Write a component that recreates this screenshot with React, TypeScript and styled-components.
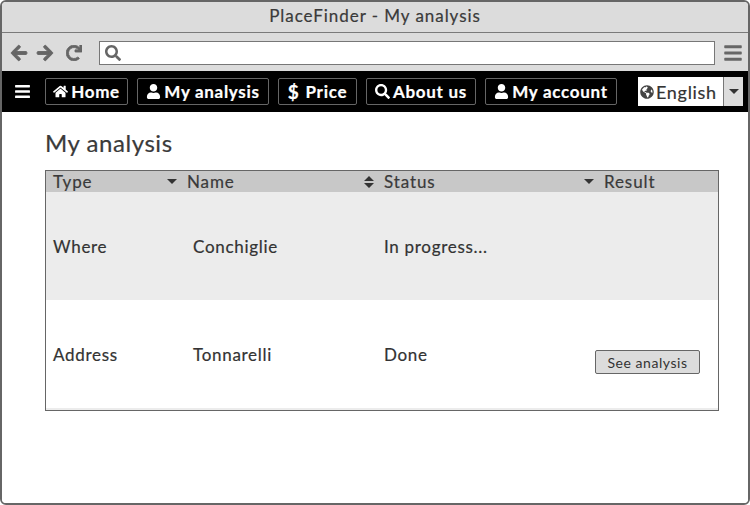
import React from 'react';
import styled, { createGlobalStyle } from 'styled-components';
import { FaArrowLeft, FaArrowRight, FaBars, FaGlobeAmericas, FaHome, FaRedo, FaSearch, FaUser } from 'react-icons/fa';

const GlobalStyle = createGlobalStyle`
    html, body { margin: 0; padding: 0; background: #fff; }
    body { font-family: "Lato", "Liberation Sans", sans-serif; color: #333; -webkit-text-stroke: 0.2px; }
`;

const Window = styled.div`
    box-sizing: border-box;
    width: 750px;
    height: 505px;
    border: 2px solid #666;
    border-radius: 6px;
    overflow: hidden;
    display: flex;
    flex-direction: column;
`;

const TitleBar = styled.div`
    box-sizing: border-box;
    height: 31px;
    padding-bottom: 3px;
    background: #dcdcdc;
    border-bottom: 1px solid #7a7a7a;
    display: flex;
    align-items: center;
    justify-content: center;
    font-size: 17px;
    letter-spacing: 0.95px;
    color: #3a3a3a;
`;

const AddressRow = styled.div`
    box-sizing: border-box;
    height: 38px;
    padding: 2px 0 0 8px;
    background: #dcdcdc;
    display: flex;
    align-items: center;
    color: #666;
`;

const NavIcons = styled.div`
    width: 89px;
    display: flex;
    align-items: center;
    gap: 8px;
    font-size: 18px;
    svg { stroke: currentColor; stroke-width: 28px; }
    svg:last-child { margin-left: 4px; font-size: 16px; }
`;

const AddressInput = styled.div`
    box-sizing: border-box;
    width: 616px;
    height: 24px;
    background: #fff;
    border: 1px solid #777;
    display: flex;
    align-items: center;
    padding-left: 5px;
    font-size: 16px;
`;

const MenuIcon = styled.div`
    margin-left: 8px;
    font-size: 20px;
    display: flex;
`;

const NavBar = styled.nav`
    height: 41px;
    background: #000;
    display: flex;
    align-items: center;
    padding-left: 12px;
`;

const Burger = styled.div`
    color: #fff;
    width: 31px;
    font-size: 17px;
    display: flex;
`;

const NavItems = styled.div`
    display: flex;
    gap: 9px;
`;

const NavButton = styled.div<{ $w: number }>`
    box-sizing: border-box;
    width: ${p => p.$w}px;
    height: 27px;
    border: 1px solid #666;
    border-radius: 2px;
    color: #fff;
    font-weight: 700;
    font-size: 17px;
    letter-spacing: 0.7px;
    display: flex;
    align-items: center;
    justify-content: center;
    gap: 3px;
    svg { font-size: 15px; flex: none; }
`;

const Dollar = styled.span`
    font-size: 19px;
    margin-right: 3px;
`;

const LangSelect = styled.div`
    margin-left: 21px;
    width: 105px;
    height: 29px;
    display: flex;
`;

const LangValue = styled.div`
    width: 85px;
    background: #fff;
    color: #333;
    font-size: 18px;
    letter-spacing: 0.7px;
    display: flex;
    align-items: center;
    padding-left: 2px;
    box-sizing: border-box;
    gap: 2px;
    svg { font-size: 14px; flex: none; color: #444; }
`;

const LangArrow = styled.div`
    width: 20px;
    background: #dcdcdc;
    border-left: 1px solid #777;
    box-sizing: border-box;
    display: flex;
    align-items: center;
    justify-content: center;
    color: #333;
`;

const Content = styled.main`
    flex: 1;
    background: #fff;
    padding: 16px 29px 0 43px;
`;

const Heading = styled.h1`
    margin: 0 0 12px;
    font-size: 24px;
    line-height: 30px;
    font-weight: 400;
    letter-spacing: 0.55px;
    color: #3a3a3a;
`;

const Table = styled.div`
    box-sizing: border-box;
    width: 674px;
    height: 241px;
    border: 1px solid #666;
    background: #ececec;
`;

const HeaderRow = styled.div`
    height: 21px;
    background: #c8c8c8;
    display: grid;
    grid-template-columns: 134px 197px 220px 1fr;
    font-size: 17px;
    letter-spacing: 0.9px;
    color: #3a3a3a;
`;

const HeaderCell = styled.div`
    padding-left: 7px;
    display: flex;
    align-items: center;
    justify-content: space-between;
    svg { margin-right: 3px; color: #333; }
`;

const Row = styled.div<{ $alt?: boolean }>`
    height: 108px;
    background: ${p => (p.$alt ? '#ececec' : '#fff')};
    display: grid;
    grid-template-columns: 140px 191px 211px 1fr;
    align-items: center;
    font-size: 17px;
    letter-spacing: 0.7px;
    color: #333;
`;

const Cell = styled.div`
    padding-left: 7px;
`;

const ActionCell = styled.div`
    padding: 16px 0 0 7px;
`;

const SeeButton = styled.button`
    box-sizing: border-box;
    width: 105px;
    height: 24px;
    padding: 0;
    background: #dcdcdc;
    border: 1px solid #666;
    border-radius: 2px;
    font-family: inherit;
    font-size: 14px;
    letter-spacing: 0.55px;
    color: #333;
    -webkit-text-stroke: 0;
    display: block;
`;

const CaretDown = () => (
    <svg width="10" height="5" viewBox="0 0 10 5"><path d="M0 0h10L5 5z" fill="currentColor" /></svg>
);

const SortArrows = () => (
    <svg width="10" height="12" viewBox="0 0 10 12"><path d="M5 0l5 5H0zM0 7h10l-5 5z" fill="currentColor" /></svg>
);

const navItems = [
    { label: 'Home', w: 83, icon: <FaHome /> },
    { label: 'My analysis', w: 132, icon: <FaUser /> },
    { label: 'Price', w: 79, icon: <Dollar>$</Dollar> },
    { label: 'About us', w: 110, icon: <FaSearch /> },
    { label: 'My account', w: 132, icon: <FaUser /> },
];

export default function App() {
    return (
        <Window>
            <GlobalStyle />
            <TitleBar>PlaceFinder - My analysis</TitleBar>
            <AddressRow>
                <NavIcons>
                    <FaArrowLeft />
                    <FaArrowRight />
                    <FaRedo />
                </NavIcons>
                <AddressInput><FaSearch /></AddressInput>
                <MenuIcon><FaBars /></MenuIcon>
            </AddressRow>
            <NavBar>
                <Burger><FaBars /></Burger>
                <NavItems>
                    {navItems.map(item => (
                        <NavButton key={item.label} $w={item.w}>
                            {item.icon}
                            {item.label}
                        </NavButton>
                    ))}
                </NavItems>
                <LangSelect>
                    <LangValue><FaGlobeAmericas />English</LangValue>
                    <LangArrow><CaretDown /></LangArrow>
                </LangSelect>
            </NavBar>
            <Content>
                <Heading>My analysis</Heading>
                <Table>
                    <HeaderRow>
                        <HeaderCell>Type<CaretDown /></HeaderCell>
                        <HeaderCell>Name<SortArrows /></HeaderCell>
                        <HeaderCell>Status<CaretDown /></HeaderCell>
                        <HeaderCell>Result</HeaderCell>
                    </HeaderRow>
                    <Row $alt>
                        <Cell>Where</Cell>
                        <Cell>Conchiglie</Cell>
                        <Cell>In progress...</Cell>
                    </Row>
                    <Row>
                        <Cell>Address</Cell>
                        <Cell>Tonnarelli</Cell>
                        <Cell>Done</Cell>
                        <ActionCell><SeeButton>See analysis</SeeButton></ActionCell>
                    </Row>
                </Table>
            </Content>
        </Window>
    );
}
